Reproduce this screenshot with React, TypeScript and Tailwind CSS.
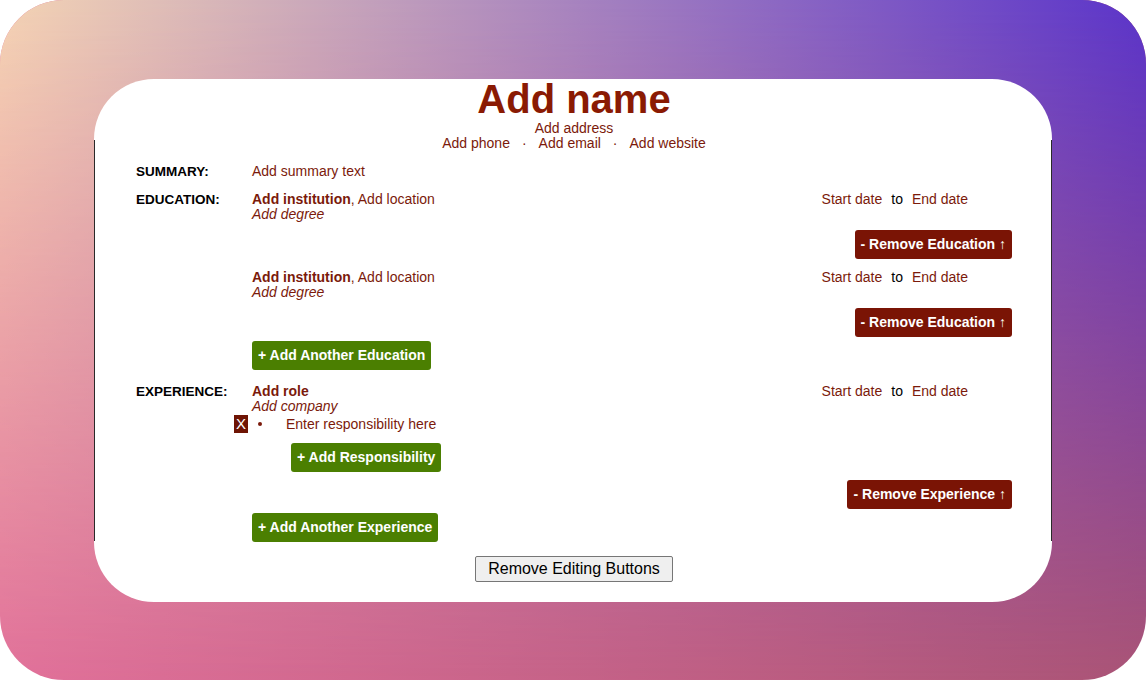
import React from "react";

const font = { fontFamily: '"Liberation Sans", Arial, sans-serif' };

const RemoveButton: React.FC<{ label: string }> = ({ label }) => (
    <div className="flex justify-end mt-[8px]">
        <button className="bg-[#7a1405] text-white font-bold text-[14px] leading-[17px] px-[6px] py-[6px] rounded-[3px]">
            - Remove {label} <span className="font-normal">↑</span>
        </button>
    </div>
);

const AddButton: React.FC<{ label: string; className?: string }> = ({ label, className }) => (
    <div className={className}>
        <button className="bg-[#4b7f01] text-white font-bold text-[14px] leading-[17px] px-[6px] py-[6px] rounded-[3px]">
            + {label}
        </button>
    </div>
);

const Dates: React.FC = () => (
    <div className="flex gap-[9px] pr-[44px]">
        <span>Start date</span>
        <span className="text-black">to</span>
        <span>End date</span>
    </div>
);

const Label: React.FC<{ text: string }> = ({ text }) => (
    <div className="w-[116px] shrink-0 text-[13.5px] font-bold text-black leading-[15px]">{text}</div>
);

const Education: React.FC<{ first?: boolean }> = ({ first }) => (
    <div className={first ? "" : "mt-[11px]"}>
        <div className="flex justify-between">
            <div>
                <div>
                    <span className="font-bold">Add institution</span>, Add location
                </div>
                <div className="italic">Add degree</div>
            </div>
            <Dates />
        </div>
        <RemoveButton label="Education" />
    </div>
);

const App: React.FC = () => {
    return (
        <div className="w-[1146px] h-[680px] bg-white" style={font}>
            <div className="relative overflow-hidden rounded-[64px] h-[680px] pt-[79px] bg-[linear-gradient(to_right,#e2719a,#aa5476)] before:content-[''] before:absolute before:inset-0 before:bg-[linear-gradient(to_right,#f4d4b4,#5a34ca)] before:[mask-image:linear-gradient(to_bottom,black,transparent)]">
                <div className="relative z-10 flow-root mx-auto w-[958px] bg-white rounded-[60px] pl-[42px] pr-[40px] pb-[20px] text-[14px] leading-[15px] text-[#7b1a0b] before:content-[''] before:absolute before:left-0 before:top-[61px] before:bottom-[61px] before:w-px before:bg-[#2a2a2a] after:content-[''] after:absolute after:right-0 after:top-[61px] after:bottom-[61px] after:w-px after:bg-[#2a2a2a]">
                    <div className="text-center">
                        <h1 className="text-[40px] font-bold leading-[46px] mt-[-3px] text-[#8a1a03]">Add name</h1>
                        <div className="mt-[-1px]">Add address</div>
                        <div>
                            <span>Add phone</span>
                            <span className="mx-[12px]">·</span>
                            <span>Add email</span>
                            <span className="mx-[12px]">·</span>
                            <span>Add website</span>
                        </div>
                    </div>

                    <div className="flex items-baseline mt-[13px]">
                        <Label text="SUMMARY:" />
                        <div>Add summary text</div>
                    </div>

                    <div className="flex items-baseline mt-[13px]">
                        <Label text="EDUCATION:" />
                        <div className="flex-1">
                            <Education first />
                            <Education />
                            <AddButton label="Add Another Education" className="mt-[4px]" />
                        </div>
                    </div>

                    <div className="flex items-baseline mt-[14px]">
                        <Label text="EXPERIENCE:" />
                        <div className="flex-1">
                            <div className="flex justify-between">
                                <div>
                                    <div className="font-bold">Add role</div>
                                    <div className="italic">Add company</div>
                                </div>
                                <Dates />
                            </div>
                            <div className="flex items-center h-[18px] mt-[1px] ml-[-18px]">
                                <button className="w-[14px] h-[18px] bg-[#6e1404] text-white text-[15px] leading-[18px] flex items-center justify-center">
                                    X
                                </button>
                                <div className="w-[4px] h-[4px] rounded-full bg-[#7b1a0b] ml-[10px]" />
                                <div className="ml-[24px]">Enter responsibility here</div>
                            </div>
                            <AddButton label="Add Responsibility" className="mt-[10px] ml-[39px]" />
                            <RemoveButton label="Experience" />
                            <AddButton label="Add Another Experience" className="mt-[4px]" />
                        </div>
                    </div>

                    <div className="flex justify-center mt-[14px]">
                        <button className="bg-[#efefef] border border-[#767676] rounded-[2px] text-black text-[16px] leading-[18px] px-[12px] py-[3px]">
                            Remove Editing Buttons
                        </button>
                    </div>
                </div>
            </div>
        </div>
    );
};

export default App;
